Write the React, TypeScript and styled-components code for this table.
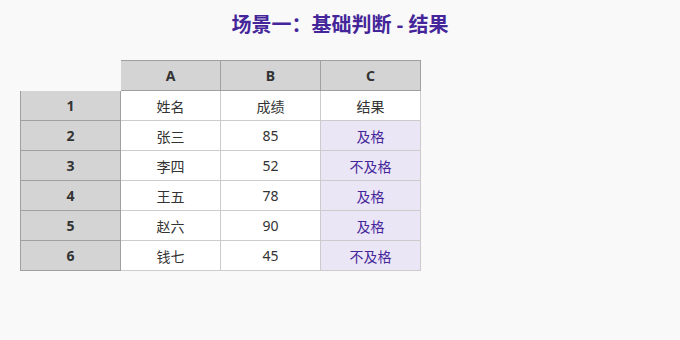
import React from 'react';
import styled, { createGlobalStyle } from 'styled-components';

const Global = createGlobalStyle`
    html, body {
        margin: 0;
        padding: 0;
        background: #f9f9f9;
        font-family: "Noto Sans", "Noto Sans CJK SC", sans-serif;
    }
`

const Page = styled.div`
    width: 680px;
    height: 340px;
    padding: 10px 20px 0;
    box-sizing: border-box;
`

const Title = styled.h1`
    margin: 0;
    height: 30px;
    line-height: 30px;
    text-align: center;
    font-size: 20px;
    font-weight: bold;
    color: #45269a;
`

const Sheet = styled.div`
    margin-top: 20px;
    display: grid;
    grid-template-columns: 101px repeat(3, 100px);
    grid-template-rows: 31px;
    grid-auto-rows: 30px;
`

const Corner = styled.div``

// header cells (A/B/C across the top, 1..6 down the side)
const Head = styled.div<{ $top?: boolean }>`
    box-sizing: border-box;
    display: flex;
    align-items: center;
    justify-content: center;
    background: #d4d4d4;
    border-right: 1px solid #a0a0a0;
    border-bottom: 1px solid #a0a0a0;
    border-top: ${p => (p.$top ? '1px solid #a0a0a0' : 'none')};
    border-left: ${p => (p.$top ? 'none' : '1px solid #a0a0a0')};
    color: #333;
    font-size: 14px;
    font-weight: bold;
`

const Cell = styled.div<{ $result?: boolean }>`
    box-sizing: border-box;
    display: flex;
    align-items: center;
    justify-content: center;
    background: ${p => (p.$result ? '#ebe6f6' : '#ffffff')};
    border-right: 1px solid #cccccc;
    border-bottom: 1px solid #cccccc;
    color: ${p => (p.$result ? '#45269a' : '#333')};
    font-size: 14px;
`

const rows = [
    ['姓名', '成绩', '结果'],
    ['张三', '85', '及格'],
    ['李四', '52', '不及格'],
    ['王五', '78', '及格'],
    ['赵六', '90', '及格'],
    ['钱七', '45', '不及格'],
]

const App = () => {
    return (
        <Page>
            <Global />
            <Title>场景一：基础判断 - 结果</Title>
            <Sheet>
                <Corner />
                <Head $top>A</Head>
                <Head $top>B</Head>
                <Head $top>C</Head>
                {rows.map((r, i) => (
                    <React.Fragment key={i}>
                        <Head>{i + 1}</Head>
                        <Cell>{r[0]}</Cell>
                        <Cell>{r[1]}</Cell>
                        <Cell $result={i > 0}>{r[2]}</Cell>
                    </React.Fragment>
                ))}
            </Sheet>
        </Page>
    )
}

export default App;
